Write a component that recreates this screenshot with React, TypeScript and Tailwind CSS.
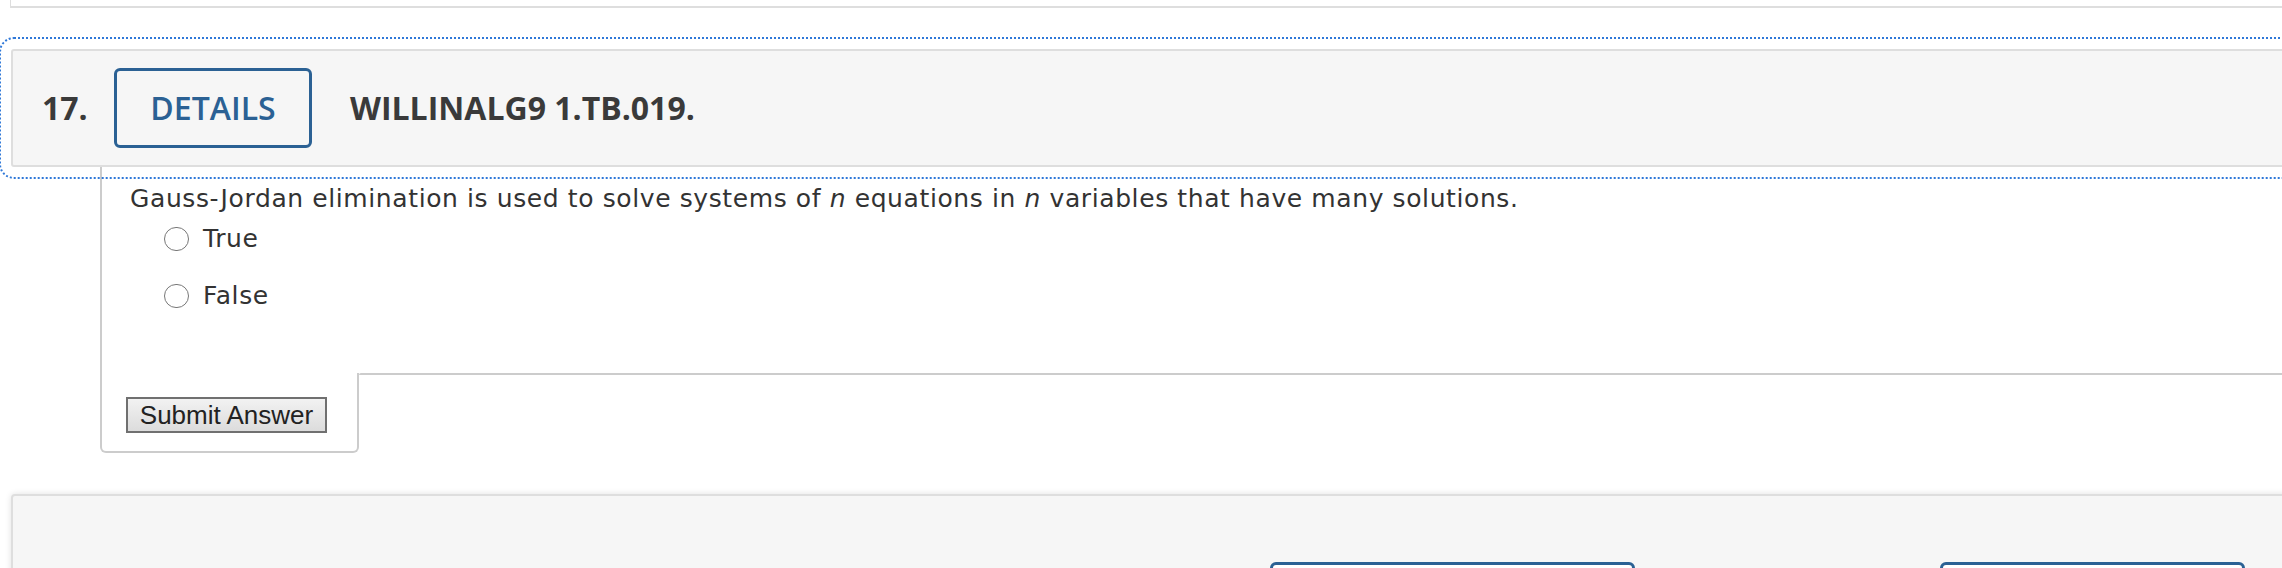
import React from "react";

function Radio({ label, className }: { label: string; className?: string }) {
  return (
    <div className={"flex h-[28px] items-center " + (className ?? "")}>
      <span className="ml-[62px] box-border h-[24px] w-[25px] rounded-full border-[1.5px] border-[#777] bg-white" />
      <span className="ml-[14px] text-[25px] leading-[28px] tracking-[0.6px] text-[#333]">{label}</span>
    </div>
  );
}

export default function App() {
  return (
    <div className="h-[568px] w-full overflow-hidden bg-white font-['DejaVu_Sans',Verdana,sans-serif]">
      <div className="w-[2330px]">
        {/* previous question box */}
        <div className="ml-[10px] h-[8px] border-b-2 border-l border-[#dedede]" />

        {/* header */}
        <div className="ml-[11px] mt-[41px] flex h-[118px] items-center rounded-[3px] border-2 border-[#dedede] bg-[#f6f6f6] outline-2 outline-offset-[10px] outline-dotted outline-[#2f78d8] font-['Open_Sans',sans-serif] text-[#3a3a3a]">
          <span className="ml-[29px] w-[72px] text-[32px] font-bold leading-none">17.</span>
          <div className="flex h-[80px] w-[198px] items-center justify-center rounded-[6px] border-[3px] border-[#2b6194] text-[32px] font-semibold leading-none text-[#2b6194]">
            DETAILS
          </div>
          <span className="ml-[38px] text-[32px] font-bold leading-none">WILLINALG9 1.TB.019.</span>
        </div>

        {/* question content */}
        <div className="ml-[100px] border-l-2 border-[#cccccc] pl-[28px] pt-[18px] text-[#333]">
          <p className="text-[25px] leading-[28px] tracking-[0.6px]">
            Gauss-Jordan elimination is used to solve systems of <i>n</i> equations in <i>n</i> variables that have many solutions.
          </p>
        </div>
        <div className="ml-[100px] border-l-2 border-[#cccccc]">
          <Radio label="True" className="pt-[12px] box-content" />
          <Radio label="False" className="pt-[29px] box-content" />
          <div className="h-[63px]" />
        </div>

        {/* submit row */}
        <div className="flex">
          <div className="ml-[100px] h-[80px] w-[259px] rounded-b-[6px] border-x-2 border-b-2 border-[#cccccc] pl-[24px] pt-[24px]">
            <button className="box-border flex h-[36px] w-[201px] items-center justify-center border-2 border-[#707070] bg-gradient-to-b from-[#f2f2f2] to-[#dcdcdc] font-['Liberation_Sans',Arial,sans-serif] text-[26px] leading-none text-[#222]">
              Submit Answer
            </button>
          </div>
          <div className="h-[2px] flex-1 rounded-tl-[4px] bg-[#cccccc]" />
        </div>

        {/* bottom panel */}
        <div className="ml-[11px] mt-[41px] h-[120px] rounded-[4px] border-2 border-[#dedede] bg-[#f6f6f6] pt-[66px] shadow-[0_0_6px_rgba(0,0,0,0.12)]">
          <div className="flex">
            <div className="ml-[1257px] h-[60px] w-[365px] rounded-[6px] border-[3px] border-[#2b6194] bg-white" />
            <div className="ml-[305px] h-[60px] w-[305px] rounded-[6px] border-[3px] border-[#2b6194] bg-white" />
          </div>
        </div>
      </div>
    </div>
  );
}
